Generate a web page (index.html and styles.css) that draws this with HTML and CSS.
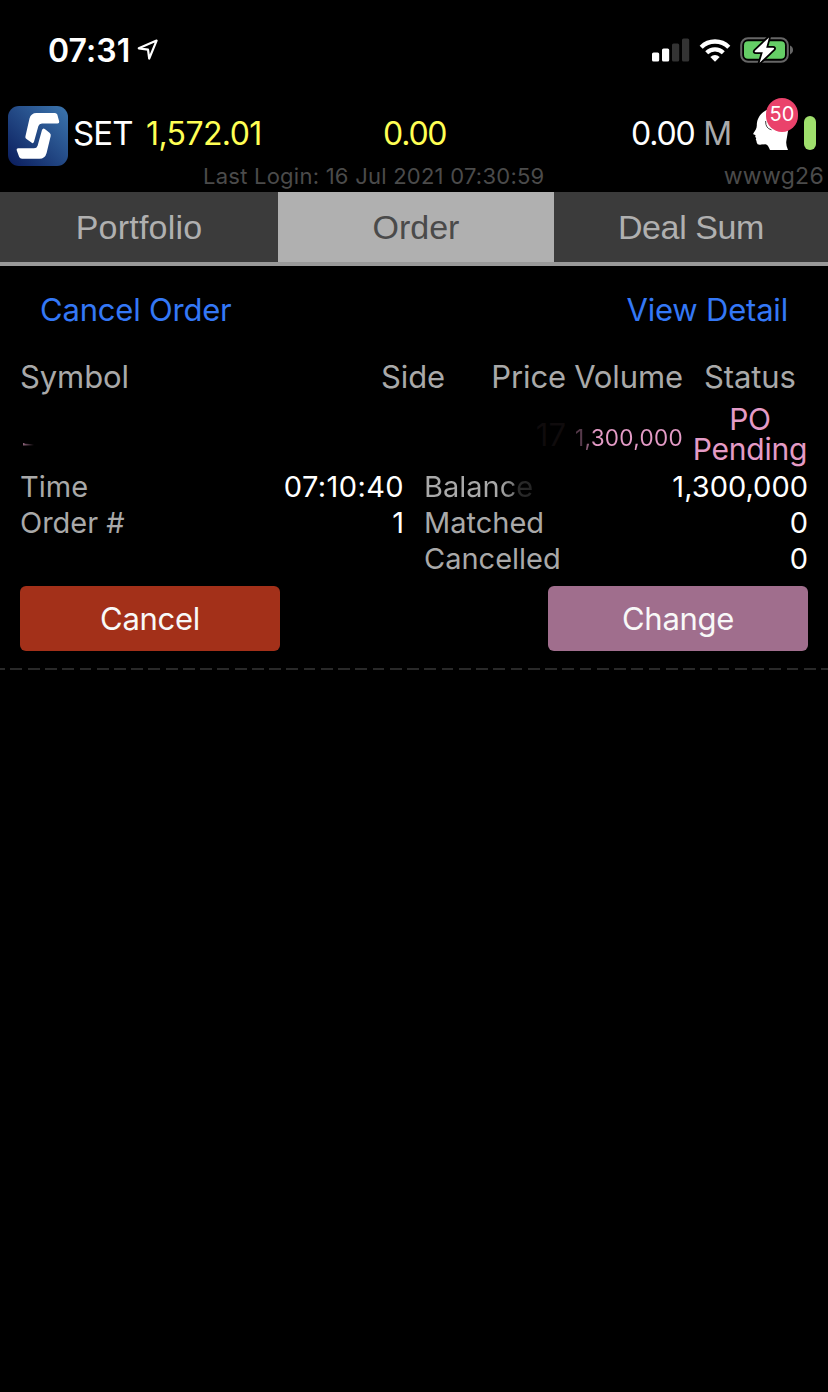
FILE: index.html
```html
<!DOCTYPE html>
<html lang="en">
<head>
  <meta charset="utf-8">
  <title>Order</title>
  <link rel="stylesheet" href="styles.css">
</head>
<body>
  <div class="status-bar">
    <div class="clock">
      <span class="clock-time">07:31</span>
      <svg class="location" width="22" height="22" viewBox="0 0 22 22">
        <path d="M1.8 9.3 L19.6 1.6 L12.2 19.6 L11 10.6 Z" fill="none" stroke="#fff" stroke-width="2.2" stroke-linejoin="round"/>
      </svg>
    </div>
    <div class="indicators">
      <svg width="38" height="24" viewBox="0 0 38 24">
        <rect x="0" y="14.5" width="7.2" height="9" rx="1.6" fill="#fff"/>
        <rect x="10" y="10.5" width="7.2" height="13" rx="1.6" fill="#fff"/>
        <rect x="20" y="5.5" width="7.2" height="18" rx="1.6" fill="#333"/>
        <rect x="30" y="0.5" width="7.2" height="23" rx="1.6" fill="#333"/>
      </svg>
      <svg width="32" height="24" viewBox="0 0 32 24">
        <path d="M2.2 9.2 A19.6 19.6 0 0 1 29.8 9.2" fill="none" stroke="#fff" stroke-width="4.4"/>
        <path d="M7.7 14.8 A11.8 11.8 0 0 1 24.3 14.8" fill="none" stroke="#fff" stroke-width="4.2"/>
        <path d="M16 23.7 L11.3 19 Q16 15.2 20.7 19 Z" fill="#fff"/>
      </svg>
      <svg width="54" height="28" viewBox="0 0 54 28">
        <rect x="1.2" y="2.3" width="46.6" height="23.4" rx="6.8" fill="none" stroke="#666" stroke-width="2"/>
        <rect x="4" y="5.2" width="41" height="17.6" rx="4" fill="#65ce66"/>
        <path d="M50 9.6 Q53 11 53 14 Q53 17 50 18.4 Z" fill="#666"/>
        <path d="M29 1.4 L15 14.8 Q14 16.2 15.8 16.2 L22.8 16.2 L19.6 26.8 L33.8 13.2 Q34.8 11.8 33 11.8 L26.2 11.8 Z" fill="#fff" stroke="#000" stroke-width="3.6" stroke-linejoin="round" paint-order="stroke"/>
      </svg>
    </div>
  </div>

  <div class="market">
    <svg class="logo" width="60" height="60" viewBox="0 0 60 60">
      <defs>
        <linearGradient id="logoBg" x1="0" y1="1" x2="1" y2="0">
          <stop offset="0" stop-color="#0a1c5c"/>
          <stop offset="1" stop-color="#3c76ae"/>
        </linearGradient>
      </defs>
      <rect width="60" height="60" rx="11" fill="url(#logoBg)"/>
      <path d="M17.4 30.5 L21.5 12.5 Q23 7 28.5 7 L47 7 Q48.5 7 49.3 8.5 L51.2 15.5 Q51.5 17.5 49.5 17.5 L34 17.5 Q31.2 17.5 30.4 20 L26 35.8 Q25.2 38 23.4 36.6 L18.5 33 Q17 32 17.4 30.5 Z" fill="#fff"/>
      <path d="M42.7 30 L38.6 47 Q37 52.8 31.5 52.8 L14 52.8 Q12 52.8 11.2 51 L8.8 44.5 Q8.2 42.3 10.3 42.3 L26 42.3 Q28.8 42.3 29.6 39.8 L34 24 Q35 21.6 36.8 23 L41.5 26.7 Q43.2 28 42.7 30 Z" fill="#fff"/>
    </svg>
    <span class="index-name">SET</span>
    <span class="index-value">1,572.01</span>
    <span class="index-change">0.00</span>
    <span class="index-volume">0.00 <span class="unit">M</span></span>
    <div class="profile">
      <svg width="40" height="44" viewBox="0 0 40 44">
        <path d="M20 3 C12 3 5 10 4.8 19 C5 22 3 25 1.4 27.2 Q.8 28.4 2.6 28.8 L3.5 29 L3.2 31 L4.2 32 L3.8 33.8 Q4.6 34.3 4.7 36.5 Q5.2 39.4 9.2 38.6 L13.5 38.2 Q16 38.5 18 44 L36 44 Q33.5 39 34.5 34 L36 25 C38 12 31 3 20 3 Z" fill="#fff"/>
        <path d="M13.6 15 Q13.4 22.5 19.5 23.8" fill="none" stroke="#444" stroke-width="1"/>
      </svg>
      <span class="badge">50</span>
    </div>
    <span class="connection"></span>
  </div>

  <div class="session">
    <span></span>
    <span class="last-login">Last Login: 16 Jul 2021 07:30:59</span>
    <span class="server">wwwg26</span>
  </div>

  <div class="tabs">
    <div class="tab">Portfolio</div>
    <div class="tab active">Order</div>
    <div class="tab tab-deal">Deal Sum</div>
  </div>

  <div class="links">
    <a class="link-cancel">Cancel Order</a>
    <a class="link-detail">View Detail</a>
  </div>

  <div class="order">
    <div class="row heading">
      <span class="symbol">Symbol</span>
      <span class="side">Side</span>
      <span class="price">Price</span>
      <span class="volume">Volume</span>
      <span class="status">Status</span>
    </div>
    <div class="row values">
      <span class="symbol"><i class="symbol-mark"></i></span>
      <span class="side"></span>
      <span class="price">17</span>
      <span class="volume"><span class="amount">1,300,000</span></span>
      <div class="status">
        <div>PO</div>
        <div>Pending</div>
      </div>
    </div>

    <div class="details">
      <div class="column">
        <div class="detail"><span>Time</span><b class="time">07:10:40</b></div>
        <div class="detail"><span>Order #</span><b>1</b></div>
      </div>
      <div class="column">
        <div class="detail"><span class="balance">Balance</span><b>1,300,000</b></div>
        <div class="detail"><span>Matched</span><b>0</b></div>
        <div class="detail"><span>Cancelled</span><b>0</b></div>
      </div>
    </div>

    <div class="actions">
      <button class="btn btn-cancel">Cancel</button>
      <button class="btn btn-change">Change</button>
    </div>
  </div>
  <div class="divider"></div>
</body>
</html>
```
FILE: styles.css
```css
* {
  margin: 0;
  padding: 0;
  box-sizing: border-box;
}

body {
  width: 828px;
  min-height: 1392px;
  background: #000;
  color: #fff;
  font-family: Inter, "Liberation Sans", sans-serif;
  font-size: 31px;
  white-space: nowrap;
}

/* status bar */
.status-bar {
  height: 98px;
  padding: 0 34px 0 48px;
  display: flex;
  justify-content: space-between;
}

.clock {
  height: 100px;
  display: flex;
  align-items: center;
  gap: 6px;
}

.clock-time {
  width: 83px;
  font-size: 32px;
  font-weight: 600;
  letter-spacing: 0.1px;
}

.indicators {
  height: 99px;
  display: flex;
  align-items: center;
  gap: 9px;
}

/* index summary */
.market {
  height: 70px;
  padding: 0 12px 0 8px;
  display: grid;
  grid-template-columns: 65px 72px 237px 160px 189px 73px 12px;
  align-items: center;
  font-size: 33px;
}

.logo {
  margin-top: 6px;
}

.index-name {
  letter-spacing: -0.9px;
}

.index-value,
.index-change {
  color: #ffff54;
}

.index-value,
.index-change,
.index-volume {
  font-size: 32px;
}

.index-value {
  padding-left: 1px;
  letter-spacing: -0.6px;
}

.index-change {
  padding-left: 1px;
  letter-spacing: -1.2px;
}

.index-volume {
  text-align: right;
  letter-spacing: -1.2px;
}

.unit {
  margin-left: 1px;
  color: #aaa;
}

.profile {
  position: relative;
  height: 44px;
  margin: -11px 0 0 21px;
}

.profile svg {
  display: block;
}

.badge {
  position: absolute;
  top: -8px;
  left: 14px;
  width: 32px;
  height: 34px;
  border-radius: 17px;
  background: #ea426b;
  font-size: 20px;
  line-height: 32px;
  text-align: center;
}

.connection {
  width: 12px;
  height: 34px;
  border-radius: 6px;
  background: #9fdf6c;
}

.session {
  height: 24px;
  padding: 0 5px;
  display: grid;
  grid-template-columns: 198px 1fr auto;
  color: #4b4b4b;
  font-size: 22px;
  line-height: 17px;
}

.last-login {
  letter-spacing: 0.24px;
}

.server {
  margin-right: -1px;
  font-size: 23px;
  letter-spacing: 0.3px;
}

/* tabs */
.tabs {
  height: 74px;
  display: grid;
  grid-template-columns: 278px 276px 274px;
  border-bottom: 4px solid #999;
  font-family: "Liberation Sans", Arial, sans-serif;
  font-size: 34px;
  line-height: 70px;
  text-align: center;
}

.tab {
  background: #3b3b3b;
  color: #b0b0b0;
  letter-spacing: 0.2px;
}

.tab.active {
  background: #b0b0b0;
  color: #4a4a4a;
  letter-spacing: 0;
}

.tab-deal {
  letter-spacing: -0.4px;
}

.links {
  height: 88px;
  padding: 0 40px;
  display: flex;
  justify-content: space-between;
  color: #3478f6;
  letter-spacing: -0.2px;
  line-height: 88px;
}

/* order card */
.order {
  padding: 0 20px;
}

.row {
  display: grid;
  grid-template-columns: 361px 64px 121px 117px 125px;
  color: #a9a9a9;
}

.heading {
  height: 46px;
  line-height: 46px;
  letter-spacing: -0.1px;
}

.row .side,
.row .price,
.row .volume {
  text-align: right;
}

.heading .status {
  padding-left: 21px;
}

.values {
  height: 68px;
  align-items: center;
  color: #e49bc6;
}

.values .status {
  padding-left: 9px;
  font-size: 30px;
  letter-spacing: -0.2px;
  line-height: 30px;
  text-align: center;
}

.values .volume {
  padding-top: 7px;
  line-height: 30px;
}

.amount {
  display: block;
  margin-left: 9px;
  font-size: 22.5px;
  letter-spacing: 0.3px;
  background: linear-gradient(90deg, #563a4b 8px, #e49bc6 20px);
  -webkit-background-clip: text;
  background-clip: text;
  color: transparent;
}

.values .price {
  color: #0f0b0c;
}

.symbol-mark {
  display: block;
  width: 11px;
  height: 3px;
  margin: 20px 0 0 3px;
  background: linear-gradient(90deg, #8b6279, #000);
  clip-path: polygon(0 0, 20% 40%, 100% 60%, 100% 100%, 0 100%);
}

.details {
  display: grid;
  grid-template-columns: 384px 384px;
  gap: 20px;
  font-size: 29px;
  line-height: 36px;
  padding-top: 1px;
}

.detail {
  display: flex;
  justify-content: space-between;
  color: #a9a9a9;
}

.detail b {
  color: #fff;
  font-weight: 400;
}

.detail .time {
  letter-spacing: 0.4px;
}

.balance {
  background: linear-gradient(90deg, #a9a9a9 70%, #777 82%, #2b2b2b 86%, #242424);
  -webkit-background-clip: text;
  background-clip: text;
  color: transparent;
}

.actions {
  padding-top: 9px;
  display: flex;
  justify-content: space-between;
}

.btn {
  width: 260px;
  height: 65px;
  border: none;
  border-radius: 6px;
  color: #f8f8f8;
  font-family: inherit;
  font-size: 31px;
  letter-spacing: -0.3px;
}

.btn-cancel {
  background: #a33019;
}

.btn-change {
  background: #a06e8d;
}

.divider {
  height: 2px;
  margin-top: 17px;
  background: repeating-linear-gradient(90deg, #292929 0 5px, transparent 5px 10.5px, #292929 10.5px 17.25px);
}
```
